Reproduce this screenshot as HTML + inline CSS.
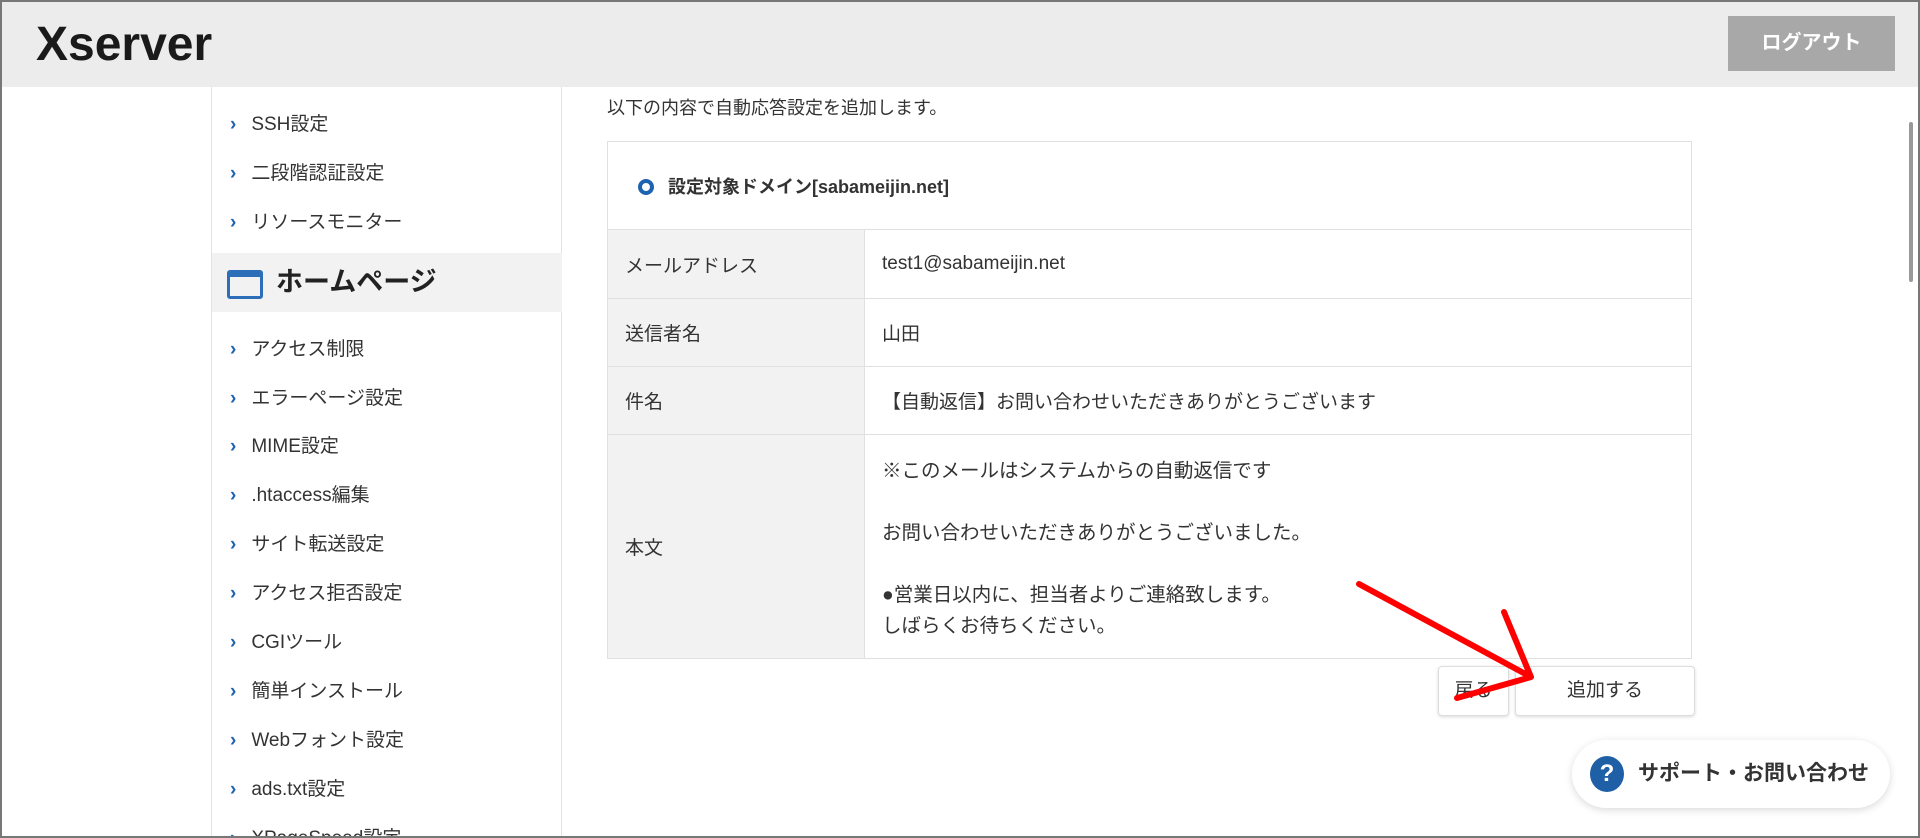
<!DOCTYPE html>
<html style="overflow:hidden"><head><meta charset="utf-8"><style>
*{box-sizing:border-box;margin:0;padding:0}
body{width:1920px;height:838px;overflow:hidden;background:#fff;font-family:"Liberation Sans","Noto Sans CJK JP",sans-serif;color:#333}
.wrap{position:relative;width:1920px;height:838px;overflow:hidden}
.frame{position:absolute;left:0;top:0;width:1920px;height:838px;border:2px solid #777;pointer-events:none;z-index:5}
.hdr{position:absolute;left:0;top:0;width:1920px;height:87px;background:#ececec}
.logo{position:absolute;left:36px;top:17px;font-size:48px;font-weight:bold;color:#1a1a1a;letter-spacing:0px}
.out{position:absolute;left:1728px;top:16px;width:167px;height:55px;background:#a8a8a8;color:#fff;font-weight:bold;font-size:20px;text-align:center;line-height:55px}
.side{position:absolute;left:211px;top:87px;width:351px;height:760px;border-left:1px solid #e3e3e3;border-right:1px solid #e3e3e3}
.it{position:absolute;left:18px;font-size:19px;color:#333}
.it:before{content:"›";color:#1e63b0;font-weight:bold;font-size:19px;margin-right:15px}
.band{position:absolute;left:0;top:166px;width:350px;height:59px;background:#f2f2f2;font-size:27px;font-weight:bold;color:#222;padding-left:64px;line-height:59px}
.ico{position:absolute;left:15px;top:17px;width:36px;height:29px;border:3px solid #2c6fb8;border-top-width:7px;border-radius:3px}
.intro{position:absolute;left:607px;top:94px;font-size:18px}
table{position:absolute;left:607px;top:141px;width:1085px;border-collapse:collapse;font-size:19px}
td{border:1px solid #e0e0e0;padding-left:17px}
td.l{background:#f2f2f2;width:257px}
.btn{position:absolute;top:666px;height:50px;border:1px solid #ddd;border-radius:4px;background:#fff;box-shadow:0 1px 3px rgba(0,0,0,.15);font-size:19px;text-align:center;line-height:48px}
.sup{position:absolute;left:1572px;top:740px;width:318px;height:68px;border-radius:34px;background:#fff;box-shadow:0 2px 8px rgba(0,0,0,.15);font-size:21px;font-weight:bold;color:#333;line-height:68px;padding-left:66px}
.q{position:absolute;left:18px;top:16px;width:34px;height:36px;border-radius:50%;background:#1e5fa6;color:#fff;text-align:center;line-height:36px;font-size:24px}
</style></head><body><div class="wrap">
<div class="hdr"><div class="logo">Xserver</div><div class="out">ログアウト</div></div>
<div class="side">
<div class="it" style="top:22px">SSH設定</div>
<div class="it" style="top:71px">二段階認証設定</div>
<div class="it" style="top:120px">リソースモニター</div>
<div class="band"><div class="ico"></div>ホームページ</div>
<div class="it" style="top:247px">アクセス制限</div>
<div class="it" style="top:296px">エラーページ設定</div>
<div class="it" style="top:344px">MIME設定</div>
<div class="it" style="top:393px">.htaccess編集</div>
<div class="it" style="top:442px">サイト転送設定</div>
<div class="it" style="top:491px">アクセス拒否設定</div>
<div class="it" style="top:540px">CGIツール</div>
<div class="it" style="top:589px">簡単インストール</div>
<div class="it" style="top:638px">Webフォント設定</div>
<div class="it" style="top:687px">ads.txt設定</div>
<div class="it" style="top:736px">XPageSpeed設定</div>
</div>
<div class="intro">以下の内容で自動応答設定を追加します。</div>
<table>
<tr style="height:88px"><td colspan="2" style="font-weight:bold;font-size:18px;padding-left:30px"><span style="display:inline-block;width:16px;height:16px;border:4px solid #1e63b0;border-radius:50%;vertical-align:-2px;margin-right:14px"></span>設定対象ドメイン[sabameijin.net]</td></tr>
<tr style="height:69px"><td class="l">メールアドレス</td><td>test1@sabameijin.net</td></tr>
<tr style="height:68px"><td class="l">送信者名</td><td>山田</td></tr>
<tr style="height:68px"><td class="l">件名</td><td>【自動返信】お問い合わせいただきありがとうございます</td></tr>
<tr style="height:224px"><td class="l">本文</td><td style="line-height:31px;padding-top:4px;font-size:19.5px">※このメールはシステムからの自動返信です<br><br>お問い合わせいただきありがとうございました。<br><br>●営業日以内に、担当者よりご連絡致します。<br>しばらくお待ちください。</td></tr>
</table>
<div class="btn" style="left:1438px;width:71px">戻る</div>
<div class="btn" style="left:1515px;width:180px">追加する</div>
<svg style="position:absolute;left:0;top:0" width="1920" height="838"><path d="M1359 584 L1531 677 M1504 612 L1531 677 L1457 698" stroke="#f00" stroke-width="6" fill="none" stroke-linecap="round" stroke-linejoin="round"/></svg>
<div class="sup"><div class="q">?</div>サポート・お問い合わせ</div>
<div style="position:absolute;left:1909px;top:122px;width:4px;height:160px;background:#999;border-radius:2px"></div>
<div class="frame"></div>
</div></body></html>
